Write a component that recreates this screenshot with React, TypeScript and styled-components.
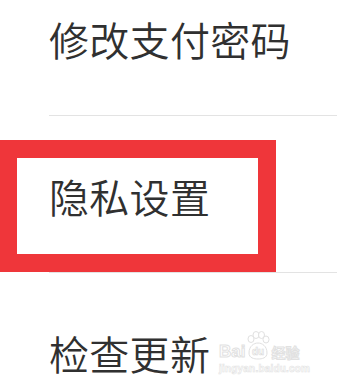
import React from "react";
import styled, { createGlobalStyle } from "styled-components";

const Global = createGlobalStyle`
  html, body { margin: 0; padding: 0; background: #ffffff; }
  body { overflow: hidden; }
`;

const Page = styled.div`
  position: relative;
  width: 337px;
  height: 385px;
  overflow: hidden;
  background: #ffffff;
  font-family: "Noto Sans CJK SC", "Noto Sans", sans-serif;
`;

const List = styled.div`
  display: flex;
  flex-direction: column;
  margin-top: -41px;
`;

const Row = styled.div`
  box-sizing: border-box;
  height: 157px;
  margin-left: 49px;
  padding-top: 4px;
  display: flex;
  align-items: center;
  border-bottom: 1px solid #e3e3e3;
`;

const Label = styled.span`
  font-size: 40px;
  line-height: 40px;
  font-weight: 350;
  color: #303030;
  letter-spacing: 0.3px;
`;

const Highlight = styled.div`
  position: absolute;
  left: -1px;
  top: 140px;
  width: 277px;
  height: 132px;
  box-sizing: border-box;
  border: 18px solid #ef363a;
`;

const Watermark = styled.div`
  position: absolute;
  left: 219px;
  top: 331px;
  width: 92px;
  display: flex;
  flex-direction: column;
  align-items: flex-start;
  opacity: 0.85;
`;

const LogoLine = styled.div`
  display: flex;
  align-items: flex-end;
  height: 30px;
`;

const OutlineText = styled.span<{ $size: number }>`
  font-family: "Liberation Sans", "Noto Sans CJK SC", sans-serif;
  font-weight: 700;
  font-size: ${(p) => p.$size}px;
  line-height: ${(p) => p.$size}px;
  color: #ffffff;
  -webkit-text-stroke: 1px #dcdcdc;
  margin-bottom: 1px;
`;

const Url = styled.span`
  font-family: "Liberation Sans", sans-serif;
  font-weight: 700;
  font-size: 10px;
  line-height: 12px;
  color: #ffffff;
  -webkit-text-stroke: 0.6px #e0e0e0;
  margin-top: 2px;
  letter-spacing: 0.2px;
`;

const Paw = () => (
  <svg width="26" height="30" viewBox="0 0 26 30">
    <g fill="#ffffff" stroke="#dcdcdc" strokeWidth="1">
      <ellipse cx="6" cy="8" rx="3" ry="3.5" />
      <ellipse cx="11" cy="4" rx="3" ry="3.5" />
      <ellipse cx="16.5" cy="4" rx="3" ry="3.5" />
      <ellipse cx="21" cy="8.5" rx="3" ry="3.5" />
      <path d="M4 22 C4 15 9 12 13 12 C17 12 22 15 22 22 C22 27 17 28 13 28 C9 28 4 27 4 22 Z" />
    </g>
    <text x="13" y="24" textAnchor="middle" fontFamily="Liberation Sans, sans-serif" fontWeight="700" fontSize="10" fill="#ffffff" stroke="#d4d4d4" strokeWidth="0.6">du</text>
  </svg>
);

const items = ["修改支付密码", "隐私设置", "检查更新"];

export default function App() {
  return (
    <>
      <Global />
      <Page>
        <List>
          {items.map((t) => (
            <Row key={t}>
              <Label>{t}</Label>
            </Row>
          ))}
        </List>
        <Highlight />
        <Watermark>
          <LogoLine>
            <OutlineText $size={17}>Bai</OutlineText>
            <Paw />
            <OutlineText $size={14}>经验</OutlineText>
          </LogoLine>
          <Url>jingyan.baidu.com</Url>
        </Watermark>
      </Page>
    </>
  );
}
